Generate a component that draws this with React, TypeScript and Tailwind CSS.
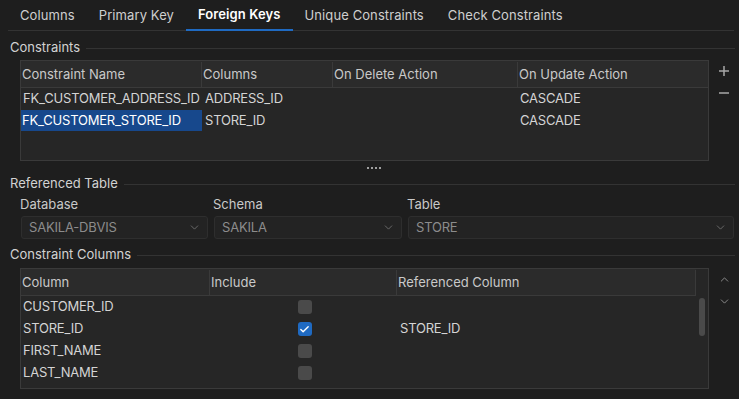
import { ChevronDown, ChevronUp, Check } from "lucide-react";

const tabs = ["Columns", "Primary Key", "Foreign Keys", "Unique Constraints", "Check Constraints"];

const SectionTitle = ({ label, className }: { label: string; className: string }) => (
	<div className={`flex items-center h-[18px] pl-[10px] pr-[4px] ${className}`}>
		<span className="text-[#d2d2d2]">{label}</span>
		<div className="flex-1 h-px bg-[#333333] ml-[6px]" />
	</div>
);

const Combo = ({ value, width }: { value: string; width: string }) => (
	<div
		className={`${width} h-[23px] flex items-center justify-between rounded-[3px] border border-[#2e2e2e] bg-[#232323] pl-[7px] pr-[6px] text-[#8c8c8c]`}
	>
		<span className="tracking-[-0.2px]">{value}</span>
		<ChevronDown size={13} strokeWidth={1.2} className="text-[#8c8c8c]" />
	</div>
);

const Box = ({ checked }: { checked?: boolean }) =>
	checked ? (
		<div className="w-[14px] h-[14px] rounded-[3px] bg-[#1f6ac2] flex items-center justify-center">
			<Check size={11} strokeWidth={3} className="text-white" />
		</div>
	) : (
		<div className="w-[14px] h-[14px] rounded-[3px] bg-[#4a4a4a]" />
	);

const App = () => {
	return (
		<div
			className="w-[739px] h-[399px] overflow-hidden bg-[#1e1e1e] text-[#d4d4d4] text-[13px]"
			style={{ fontFamily: "Inter, 'Noto Sans', sans-serif" }}
		>
			{/* tab strip */}
			<div className="flex h-[31px] ml-[8px] mr-[5px] border-b border-[#333333] tracking-[0.1px]">
				{tabs.map((t) => (
					<div
						key={t}
						className={
							t === "Foreign Keys"
								? "h-[31px] px-3 pt-px flex items-center font-semibold text-white border-b-2 border-[#1f6ac2]"
								: "h-[30px] px-3 pt-px flex items-center text-[#cfcfcf]"
						}
					>
						{t}
					</div>
				))}
			</div>

			<SectionTitle label="Constraints" className="mt-[8px]" />

			<div className="flex mt-[3px]">
				<div className="ml-[20px] w-[689px] h-[101px] border border-[#3a3a3a] bg-[#262626]">
					<div className="flex h-[27px] bg-[#2b2b2b] border-b border-[#3a3a3a] text-[#c9c9c9] pt-px">
						<div className="w-[181px] pl-[1px] flex items-center border-r border-[#3a3a3a]">Constraint Name</div>
						<div className="w-[131px] pl-[1px] flex items-center border-r border-[#3a3a3a]">Columns</div>
						<div className="w-[185px] pl-[1px] flex items-center border-r border-[#3a3a3a]">On Delete Action</div>
						<div className="flex-1 pl-[1px] flex items-center">On Update Action</div>
					</div>
					<div className="flex h-[22px] items-center tracking-[-0.2px]">
						<div className="w-[181px] pl-[2px]">FK_CUSTOMER_ADDRESS_ID</div>
						<div className="w-[131px] pl-[3px]">ADDRESS_ID</div>
						<div className="w-[185px]" />
						<div className="flex-1 pl-[2px]">CASCADE</div>
					</div>
					<div className="flex h-[21px] items-center tracking-[-0.2px]">
						<div className="w-[181px] h-full flex items-center pl-[1px] bg-[#17488c] text-white">FK_CUSTOMER_STORE_ID</div>
						<div className="w-[131px] pl-[3px]">STORE_ID</div>
						<div className="w-[185px]" />
						<div className="flex-1 pl-[2px]">CASCADE</div>
					</div>
				</div>
				<div className="flex flex-col items-center ml-[10px] w-[10px] text-[#a8a8a8]">
					<svg width="10" height="10" viewBox="0 0 10 10" className="mt-[6px]">
						<path d="M0 5H10M5 0V10" stroke="currentColor" strokeWidth="1.5" />
					</svg>
					<svg width="10" height="10" viewBox="0 0 10 10" className="mt-[12px]">
						<path d="M0 5H10" stroke="currentColor" strokeWidth="1.5" />
					</svg>
				</div>
			</div>

			<div className="flex justify-center gap-[2px] mt-[6px] h-[2px] ml-[8px]">
				<div className="w-[2px] h-[2px] bg-[#a0a0a0]" />
				<div className="w-[2px] h-[2px] bg-[#a0a0a0]" />
				<div className="w-[2px] h-[2px] bg-[#a0a0a0]" />
				<div className="w-[2px] h-[2px] bg-[#a0a0a0]" />
			</div>

			<SectionTitle label="Referenced Table" className="mt-[6px]" />

			<div className="flex ml-[21px] mt-[3px] gap-[6px] text-[#c9c9c9]">
				<div className="w-[187px]">
					<div className="h-[17px] flex items-center -ml-[1px]">Database</div>
					<Combo value="SAKILA-DBVIS" width="w-[187px] mt-[3px]" />
				</div>
				<div className="w-[188px]">
					<div className="h-[17px] flex items-center -ml-[1px]">Schema</div>
					<Combo value="SAKILA" width="w-[188px] mt-[3px]" />
				</div>
				<div className="w-[326px]">
					<div className="h-[17px] flex items-center -ml-[1px]">Table</div>
					<Combo value="STORE" width="w-[326px] mt-[3px]" />
				</div>
			</div>

			<SectionTitle label="Constraint Columns" className="mt-[7px]" />

			<div className="flex mt-[4px]">
				<div className="ml-[20px] w-[689px] h-[121px] border border-[#3a3a3a] bg-[#262626] flex overflow-hidden">
					<div className="flex-1">
						<div className="flex h-[27px] bg-[#2b2b2b] border-b border-[#3a3a3a] text-[#c9c9c9] pt-px">
							<div className="w-[189px] pl-[1px] flex items-center border-r border-[#3a3a3a]">Column</div>
							<div className="w-[187px] pl-[1px] flex items-center border-r border-[#3a3a3a]">Include</div>
							<div className="flex-1 pl-[1px] flex items-center border-r border-[#3a3a3a]">Referenced Column</div>
						</div>
						{[
							["CUSTOMER_ID", false, ""],
							["STORE_ID", true, "STORE_ID"],
							["FIRST_NAME", false, ""],
							["LAST_NAME", false, ""],
							["", false, ""],
						].map(([name, on, ref], i) => (
							<div key={i} className="flex h-[22px] items-center tracking-[-0.2px]">
								<div className="w-[189px] pl-[2px]">{name as string}</div>
								<div className="w-[187px] flex justify-center pl-[2px]">
									<Box checked={on as boolean} />
								</div>
								<div className="flex-1 pl-[3px]">{ref as string}</div>
							</div>
						))}
					</div>
					<div className="w-[12px] pt-[29px] flex justify-center">
						<div className="w-[6px] h-[38px] rounded-[3px] bg-[#4a4a4a]" />
					</div>
				</div>
				<div className="flex flex-col items-center ml-[8px] w-[14px] text-[#a0a0a0]">
					<ChevronUp size={13} strokeWidth={1.5} className="mt-[5px]" />
					<ChevronDown size={13} strokeWidth={1.5} className="mt-[9px]" />
				</div>
			</div>
		</div>
	);
};

export default App;
